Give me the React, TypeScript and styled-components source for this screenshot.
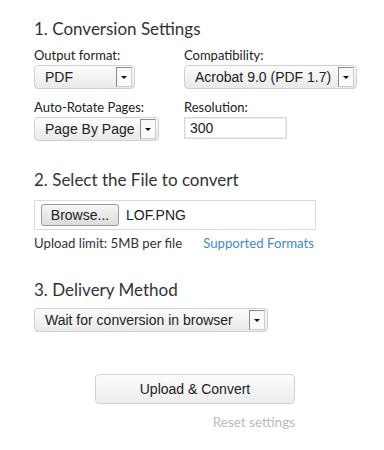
import React from "react";
import styled, { createGlobalStyle } from "styled-components";

const GlobalStyle = createGlobalStyle`
  body {
    margin: 0;
    background: #fff;
  }
`;

const App = () => {
  return (
    <Page>
      <GlobalStyle />
      <Section>
        <Heading>1. Conversion Settings</Heading>
        <FieldGrid>
          <Field>
            <Label>Output format:</Label>
            <Select width={101}>
              <SelectText>PDF</SelectText>
              <Arrow />
            </Select>
          </Field>
          <Field>
            <Label>Compatibility:</Label>
            <Select width={173}>
              <SelectText>Acrobat 9.0 (PDF 1.7)</SelectText>
              <Arrow />
            </Select>
          </Field>
          <Field>
            <Label>Auto-Rotate Pages:</Label>
            <Select width={125}>
              <SelectText>Page By Page</SelectText>
              <Arrow />
            </Select>
          </Field>
          <Field>
            <Label>Resolution:</Label>
            <TextInput>300</TextInput>
          </Field>
        </FieldGrid>
      </Section>

      <Section>
        <Heading>2. Select the File to convert</Heading>
        <FileBox>
          <BrowseButton>Browse...</BrowseButton>
          <FileName>LOF.PNG</FileName>
        </FileBox>
        <InfoRow>
          <span>Upload limit: 5MB per file</span>
          <Link>Supported Formats</Link>
        </InfoRow>
      </Section>

      <Section $last>
        <Heading>3. Delivery Method</Heading>
        <Select width={234}>
          <SelectText>Wait for conversion in browser</SelectText>
          <Arrow />
        </Select>
      </Section>

      <Actions>
        <ConvertButton>Upload &amp; Convert</ConvertButton>
        <Reset>Reset settings</Reset>
      </Actions>
    </Page>
  );
};

export default App;

const Page = styled.div`
  width: 384px;
  height: 450px;
  box-sizing: border-box;
  padding: 18px 0 0 34px;
  font-family: "Lato", "Open Sans", sans-serif;
  color: #333;
`;

const Section = styled.div<{ $last?: boolean }>`
  display: flex;
  flex-direction: column;
  align-items: flex-start;
  margin-bottom: ${(p) => (p.$last ? 42 : 28)}px;
`;

const Heading = styled.h2`
  margin: 0 0 7px 0;
  font-size: 17px;
  font-weight: 400;
  line-height: 22px;
  color: #333;
`;

const FieldGrid = styled.div`
  display: grid;
  grid-template-columns: 150px 1fr;
  row-gap: 10px;
`;

const Field = styled.div`
  display: flex;
  flex-direction: column;
  align-items: flex-start;
`;

const Label = styled.label`
  font-size: 13px;
  line-height: 17px;
  margin-bottom: 1px;
  color: #222;
`;

const Select = styled.div<{ width: number }>`
  width: ${(p) => p.width}px;
  height: 24px;
  box-sizing: border-box;
  display: flex;
  align-items: center;
  justify-content: space-between;
  padding: 0 2px 0 10px;
  border: 1px solid #d0d0d0;
  border-radius: 4px;
  background: linear-gradient(#fdfdfd, #e9e9e9);
  font-family: "Liberation Sans", Arial, sans-serif;
  font-size: 14px;
  color: #222;
`;

const SelectText = styled.span`
  white-space: nowrap;
`;

const Arrow = styled.span`
  width: 16px;
  height: 20px;
  box-sizing: border-box;
  border: 1px solid #8a8a8a;
  border-right-color: #ccc;
  border-bottom-color: #ccc;
  background: #fafafa;
  display: flex;
  align-items: center;
  justify-content: center;

  &::after {
    content: "";
    border-left: 3px solid transparent;
    border-right: 3px solid transparent;
    border-top: 3px solid #111;
  }
`;

const TextInput = styled.div`
  width: 103px;
  height: 22px;
  box-sizing: border-box;
  border: 1px solid #d8d8d8;
  box-shadow: inset 0 0 0 1px #eee;
  padding: 0 5px;
  display: flex;
  align-items: center;
  font-family: "Liberation Sans", Arial, sans-serif;
  font-size: 14px;
  color: #222;
`;

const FileBox = styled.div`
  width: 282px;
  height: 30px;
  box-sizing: border-box;
  border: 1px solid #dcdcdc;
  display: flex;
  align-items: center;
  padding-left: 6px;
  gap: 7px;
  margin-top: 2px;
`;

const BrowseButton = styled.button`
  width: 78px;
  height: 22px;
  box-sizing: border-box;
  padding: 0;
  border: 1px solid #9a9a9a;
  border-radius: 3px;
  background: linear-gradient(#f6f6f6, #dcdcdc);
  font-family: "Liberation Sans", Arial, sans-serif;
  font-size: 14px;
  color: #222;
`;

const FileName = styled.span`
  font-family: "Liberation Sans", Arial, sans-serif;
  font-size: 14px;
  color: #222;
`;

const InfoRow = styled.div`
  display: flex;
  gap: 21px;
  margin-top: 5px;
  font-size: 13.2px;
  line-height: 16px;
  color: #333;
`;

const Link = styled.a`
  color: #3d8bc9;
  cursor: pointer;
`;

const Actions = styled.div`
  width: 261px;
  display: flex;
  flex-direction: column;
  align-items: flex-end;
  gap: 10px;
`;

const ConvertButton = styled.button`
  width: 200px;
  height: 30px;
  padding: 0;
  border: 1px solid #d2d2d2;
  border-radius: 4px;
  background: linear-gradient(#fdfdfd, #ececec);
  font-family: "Liberation Sans", Arial, sans-serif;
  font-size: 14px;
  color: #222;
`;

const Reset = styled.span`
  font-size: 13.5px;
  color: #bbb;
`;
